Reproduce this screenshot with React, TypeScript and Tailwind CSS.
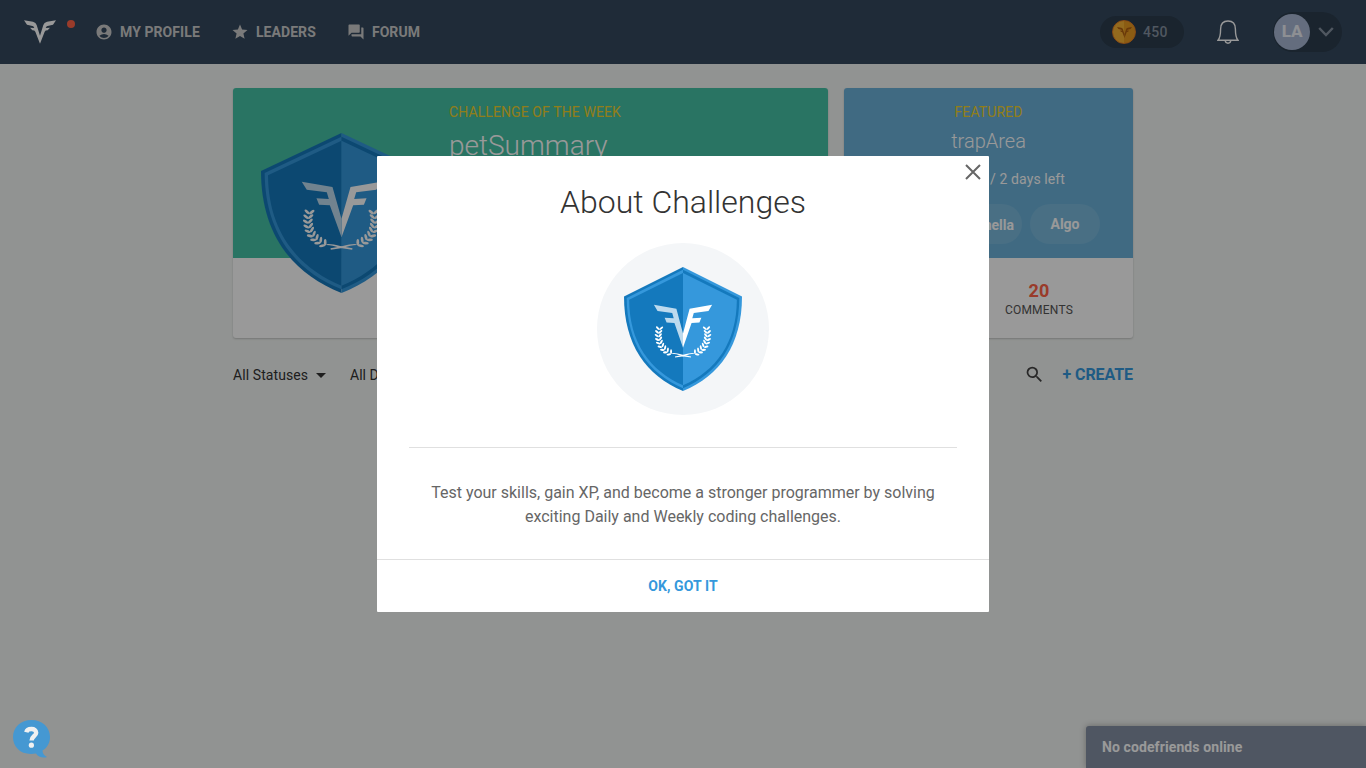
import React from "react";
import { MdAccountCircle, MdStar, MdForum, MdSearch, MdArrowDropDown } from "react-icons/md";

const wing =
  "M122 146 L214 162 L241 257 V313 L206 217 L174 215 L166 196 L203 198 L197 178 L137 170 Z";
const half = "M241 0 L0 114 C0 300 90 420 241 480 Z";
const halfMid = "M241 11 L11 120 C12 297 99 412 241 469 Z";
const halfInner = "M241 23 L21 127 C22 293 106 402 241 458 Z";

const leaves = [
  [145, 240, 2],
  [142, 254, -2],
  [141, 268, -7],
  [143, 282, -13],
  [147, 295, -20],
  [154, 308, -28],
  [164, 319, -36],
  [176, 328, -43],
  [190, 335, -50],
];

function Laurel() {
  return (
    <g fill="#fff">
      {leaves.map(([x, y, a]) => (
        <g key={y} transform={`translate(${x} ${y}) rotate(${a})`}>
          <ellipse cx="-7" cy="-3" rx="4" ry="9.5" transform="rotate(-50 -7 -3)" />
          <ellipse cx="7" cy="-3" rx="4" ry="9.5" transform="rotate(50 7 -3)" />
        </g>
      ))}
      <path d="M196 334 Q206 331 240 340 L274 346 L273 350 L238 345 Q212 336 196 336 Z" />
    </g>
  );
}

function Shield({ className }: { className: string }) {
  return (
    <svg className={className} viewBox="0 0 482 480" preserveAspectRatio="none">
      <path d={half} fill="#1479bd" />
      <path d={halfMid} fill="#3598dc" />
      <path d={halfInner} fill="#1479bd" />
      <g transform="translate(482 0) scale(-1 1)">
        <path d={half} fill="#3598dc" />
        <path d={halfMid} fill="#1479bd" />
        <path d={halfInner} fill="#3598dc" />
        <path d={wing} fill="#fff" />
        <Laurel />
      </g>
      <path d={wing} fill="#bddaee" />
      <Laurel />
    </svg>
  );
}

const logoWing =
  "M0 0 L27 4 Q36 6 38 14 L48 46 V70 L34 34 Q32 30 25 30 L18 22 L31 23 Q29 16 22 16 L9 13 Z";

function Logo({ className, color }: { className: string; color: string }) {
  return (
    <svg className={className} viewBox="0 0 96 70" fill={color}>
      <path d={logoWing} />
      <path d={logoWing} transform="translate(96 0) scale(-1 1)" />
    </svg>
  );
}

function Header() {
  return (
    <header className="flex h-16 items-center bg-[#34495e] px-6 text-[#cccccc]">
      <div className="relative w-8">
        <Logo className="h-6 w-8" color="#fff" />
        <span className="absolute top-0 left-[43px] size-2 rounded-full bg-[#ff6347]" />
      </div>
      <nav className="ml-[39px] flex gap-[31px] text-sm font-bold tracking-[0.08px]">
        <span className="flex items-center gap-[7px]"><MdAccountCircle size={18} />MY PROFILE</span>
        <span className="flex items-center gap-[7px]"><MdStar size={18} />LEADERS</span>
        <span className="flex items-center gap-[7px]"><MdForum size={18} />FORUM</span>
      </nav>
      <div className="ml-auto flex items-center">
        <div className="flex h-8 w-[84px] items-center rounded-full bg-[#2c3c4d] pl-3 text-sm font-medium tracking-[0.3px] text-[#8592a0]">
          <span className="mr-[7px] flex size-6 items-center justify-center rounded-full border-[1.5px] border-[#e67e22] bg-[linear-gradient(90deg,#f5b133_50%,#e89a20_50%)]">
            <Logo className="h-[11px] w-[15px]" color="#b05f10" />
          </span>
          450
        </div>
        <svg className="ml-[33px] h-6 w-[22px]" viewBox="0 0 22 24" fill="none" stroke="#fff" strokeWidth="1.4">
          <path d="M1 20.3 C3 18 3.6 15 3.6 9 C3.6 4 6.5 1 11 1 C15.5 1 18.4 4 18.4 9 C18.4 15 19 18 21 20.3 Z" />
          <path d="M8.2 20.5 Q8.5 23.2 11 23.2 Q13.5 23.2 13.8 20.5" />
        </svg>
        <div className="ml-[34px] flex h-10 w-[69px] items-center rounded-full bg-[#2c3c4d] pl-px">
          <span className="flex size-9 items-center justify-center rounded-full bg-[#a7b6d2] text-[17px] font-extrabold tracking-[-0.3px] text-[#eceff5]">LA</span>
          <svg className="ml-2 h-4 w-4" viewBox="0 0 16 16" fill="none" stroke="#8592a0" strokeWidth="2.4">
            <path d="M1.2 4 L8 11 L14.8 4" />
          </svg>
        </div>
      </div>
    </header>
  );
}

function Cards() {
  return (
    <div className="flex gap-4">
      <section className="relative h-[250px] w-[595px] rounded-[3px] bg-white shadow-[0_1px_2px_rgba(0,0,0,0.2)]">
        <div className="h-[170px] rounded-t-[3px] bg-[#45c1a5] pl-[216px] pt-3.5">
          <div className="text-sm leading-5 tracking-[0.1px] text-[#f1d22b]">CHALLENGE OF THE WEEK</div>
          <div className="mt-1.5 text-[28px] font-light leading-9 text-white">petSummary</div>
        </div>
        <Shield className="absolute left-7 top-[45px] h-40 w-[161px]" />
      </section>
      <section className="h-[250px] w-[289px] rounded-[3px] bg-white shadow-[0_1px_2px_rgba(0,0,0,0.2)]">
        <div className="h-[170px] rounded-t-[3px] bg-[#6bb1d9] pt-3.5 text-center text-white">
          <div className="text-sm leading-5 tracking-[0.1px] text-[#f1d22b]">FEATURED</div>
          <div className="mt-[5px] text-xl font-light leading-7">trapArea</div>
          <div className="mt-3.5 pr-[68px] text-right text-sm leading-5 tracking-[0.1px]">/ 2 days left</div>
          <div className="mt-[15px] flex justify-center gap-2 text-sm font-bold">
            <span className="flex h-10 w-[145px] items-center justify-end rounded-full bg-white/10 pr-2 pt-0.5">nella</span>
            <span className="flex h-10 w-[70px] items-center justify-center rounded-full bg-white/10">Algo</span>
          </div>
        </div>
        <div className="flex h-20 justify-end pr-[60px] pt-[21px] text-center">
          <div>
            <div className="text-lg font-bold leading-6 tracking-[0.2px] text-[#ff6347]">20</div>
            <div className="text-xs leading-[14px] tracking-[0.2px] text-[#555]">COMMENTS</div>
          </div>
        </div>
      </section>
    </div>
  );
}

function Toolbar() {
  return (
    <div className="mt-[25px] flex h-6 items-center text-sm text-[#333]">
      <span className="flex items-center tracking-[0.08px]">All Statuses<MdArrowDropDown size={24} className="ml-px" /></span>
      <span className="ml-[17px]">All Difficulties</span>
      <MdSearch size={21} className="mb-[2px] ml-auto text-[#444]" />
      <span className="ml-[18px] text-base font-bold tracking-[-0.08px] text-[#3598dc]">+ CREATE</span>
    </div>
  );
}

function Modal() {
  return (
    <div className="relative h-[456px] w-[612px] rounded-[1px] bg-white text-center">
      <svg className="absolute right-2 top-2 size-4" viewBox="0 0 16 16" stroke="#666" strokeWidth="2">
        <path d="M1 1 L15 15 M15 1 L1 15" />
      </svg>
      <div className="px-8 pt-[26px]">
        <h1 className="text-[32px] font-light leading-10 text-[#333]">About Challenges</h1>
        <div className="mx-auto mt-[21px] flex size-[172px] items-center justify-center rounded-full bg-[#f4f6f8]">
          <Shield className="h-[124px] w-[118px]" />
        </div>
        <div className="mt-8 border-t border-[#e0e0e0] pt-[33px]">
          <p className="text-base leading-6 text-[#666]">
            Test your skills, gain XP, and become a stronger programmer by solving
            <br />
            exciting Daily and Weekly coding challenges.
          </p>
        </div>
      </div>
      <div className="mt-[30px] flex h-[53px] items-center justify-center border-t border-[#e0e0e0] text-sm font-bold tracking-[0.1px] text-[#3598dc]">
        OK, GOT IT
      </div>
    </div>
  );
}

export default function App() {
  return (
    <div className="relative h-screen overflow-hidden bg-[#f2f5f3] font-['Roboto',sans-serif]">
      <Header />
      <main className="mx-auto w-[900px] pt-6">
        <Cards />
        <Toolbar />
      </main>
      <aside className="absolute bottom-0 right-0 flex h-[42px] w-[280px] items-center rounded-tl-[3px] bg-[#848fa3] pl-4 text-sm font-bold tracking-[0.1px] text-white shadow-[0_0_6px_rgba(0,0,0,0.3)]">
        No codefriends online
      </aside>
      <div className="absolute inset-0 flex items-center justify-center bg-black/40">
        <Modal />
      </div>
      <div className="absolute left-[13px] top-[720px] h-[38px] w-[37px]">
        <svg className="h-full w-full" viewBox="0 0 37 38">
          <path d="M18.5 0 C29 0 37 7 37 17 C37 23 34 28 29.5 30.5 C29.5 33.5 31 35.5 34 37 C30 38.5 25 37 23 33.5 C9 36 0 28 0 17 C0 7 8 0 18.5 0 Z" fill="#4598d2" />
          <path d="M13.3 12.2 C14.3 8 23.3 7.8 23.2 12.8 C23.2 16 18.6 16.2 18.6 20.5" fill="none" stroke="#f1f1f1" strokeWidth="4.4" />
          <circle cx="18.4" cy="25.2" r="2.6" fill="#f1f1f1" />
        </svg>
      </div>
    </div>
  );
}
